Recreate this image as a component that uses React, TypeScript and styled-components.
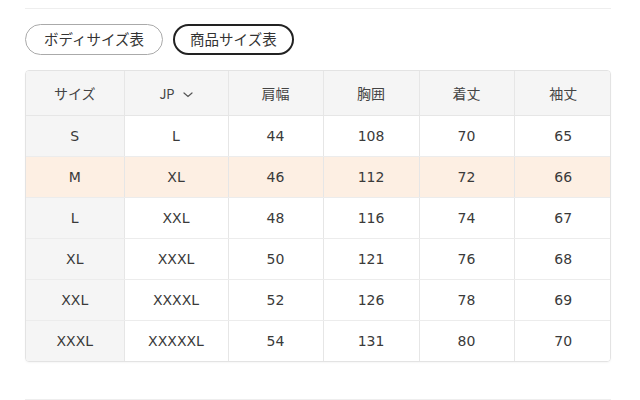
import React from 'react';
import styled, { createGlobalStyle } from 'styled-components';

const GlobalStyle = createGlobalStyle`
  html, body {
    margin: 0;
    padding: 0;
    background: #fff;
  }
  body {
    font-family: "DejaVu Sans", "Noto Sans CJK JP", sans-serif;
    color: #333;
  }
`;

const headers = ['サイズ', 'JP', '肩幅', '胸囲', '着丈', '袖丈'];
const widths = [98, 104, 95, 96, 95, 98];

const rows = [
  ['S', 'L', '44', '108', '70', '65'],
  ['M', 'XL', '46', '112', '72', '66'],
  ['L', 'XXL', '48', '116', '74', '67'],
  ['XL', 'XXXL', '50', '121', '76', '68'],
  ['XXL', 'XXXXL', '52', '126', '78', '69'],
  ['XXXL', 'XXXXXL', '54', '131', '80', '70'],
];

const App = () => {
  return (
    <>
      <GlobalStyle />
      <Page>
        <Divider />
        <Tabs>
          <TabButton>ボディサイズ表</TabButton>
          <TabButton $active>商品サイズ表</TabButton>
        </Tabs>
        <TableWrap>
          <SizeTable>
            <colgroup>
              {widths.map((w, i) => (
                <col key={i} style={{ width: w }} />
              ))}
            </colgroup>
            <thead>
              <tr>
                {headers.map((h, i) => (
                  <HeadCell key={h} $first={i === 0}>
                    {h === 'JP' ? (
                      <Unit>
                        JP
                        <svg width="10" height="6" viewBox="0 0 10 6" fill="none">
                          <path d="M1 1l4 3.5L9 1" stroke="#555" strokeWidth="1.2" strokeLinecap="round" />
                        </svg>
                      </Unit>
                    ) : (
                      h
                    )}
                  </HeadCell>
                ))}
              </tr>
            </thead>
            <tbody>
              {rows.map((r) => (
                <tr key={r[0]}>
                  {r.map((v, i) => (
                    <Cell key={i} $first={i === 0} $highlight={r[0] === 'M'}>
                      {v}
                    </Cell>
                  ))}
                </tr>
              ))}
            </tbody>
          </SizeTable>
        </TableWrap>
        <BottomDivider />
      </Page>
    </>
  );
};

const Page = styled.div`
  width: 586px;
  padding: 8px 0 0 25px;
  display: flex;
  flex-direction: column;
`;

const Divider = styled.div`
  height: 1px;
  background: #eeeeee;
`;

const BottomDivider = styled(Divider)`
  margin-top: 37px;
`;

const Tabs = styled.div`
  display: flex;
  gap: 10px;
  margin-top: 15px;
`;

const TabButton = styled.button<{ $active?: boolean }>`
  height: 31px;
  padding: 0 ${(p) => (p.$active ? '15px' : '18px')};
  border-radius: 16px;
  border: ${(p) => (p.$active ? '2px solid #222' : '1px solid #aaa')};
  background: #fff;
  color: #333;
  font-family: "Noto Sans CJK JP", sans-serif;
  font-size: 14.5px;
  line-height: 1;
  cursor: pointer;
`;

const TableWrap = styled.div`
  margin-top: 15px;
  border: 1px solid #e3e3e3;
  border-radius: 4px;
  overflow: hidden;
  box-shadow: 0 1px 2px rgba(0, 0, 0, 0.04);
`;

const SizeTable = styled.table`
  width: 100%;
  table-layout: fixed;
  border-collapse: collapse;
  font-size: 14px;

  tbody tr:last-child td {
    border-bottom: none;
  }
`;

const HeadCell = styled.th<{ $first?: boolean }>`
  height: 44px;
  padding: 0;
  background: #f5f5f5;
  font-family: "Noto Sans CJK JP", sans-serif;
  font-weight: normal;
  font-size: 14px;
  color: #444;
  text-align: center;
  border-left: ${(p) => (p.$first ? 'none' : '1px solid #e6e6e6')};
  border-bottom: 1px solid #e6e6e6;
`;

const Unit = styled.span`
  display: inline-flex;
  align-items: center;
  gap: 8px;
  font-family: "Noto Sans CJK JP", sans-serif;
  font-size: 13px;
  svg {
    margin-top: 2px;
  }
`;

const Cell = styled.td<{ $first?: boolean; $highlight?: boolean }>`
  height: 40px;
  padding: 0;
  text-align: center;
  color: #3a3a3a;
  background: ${(p) => (p.$highlight ? '#fdefe3' : p.$first ? '#f5f5f5' : '#fff')};
  border-left: ${(p) => (p.$first ? 'none' : '1px solid #e6e6e6')};
  border-bottom: 1px solid #ececec;
`;

export default App;
